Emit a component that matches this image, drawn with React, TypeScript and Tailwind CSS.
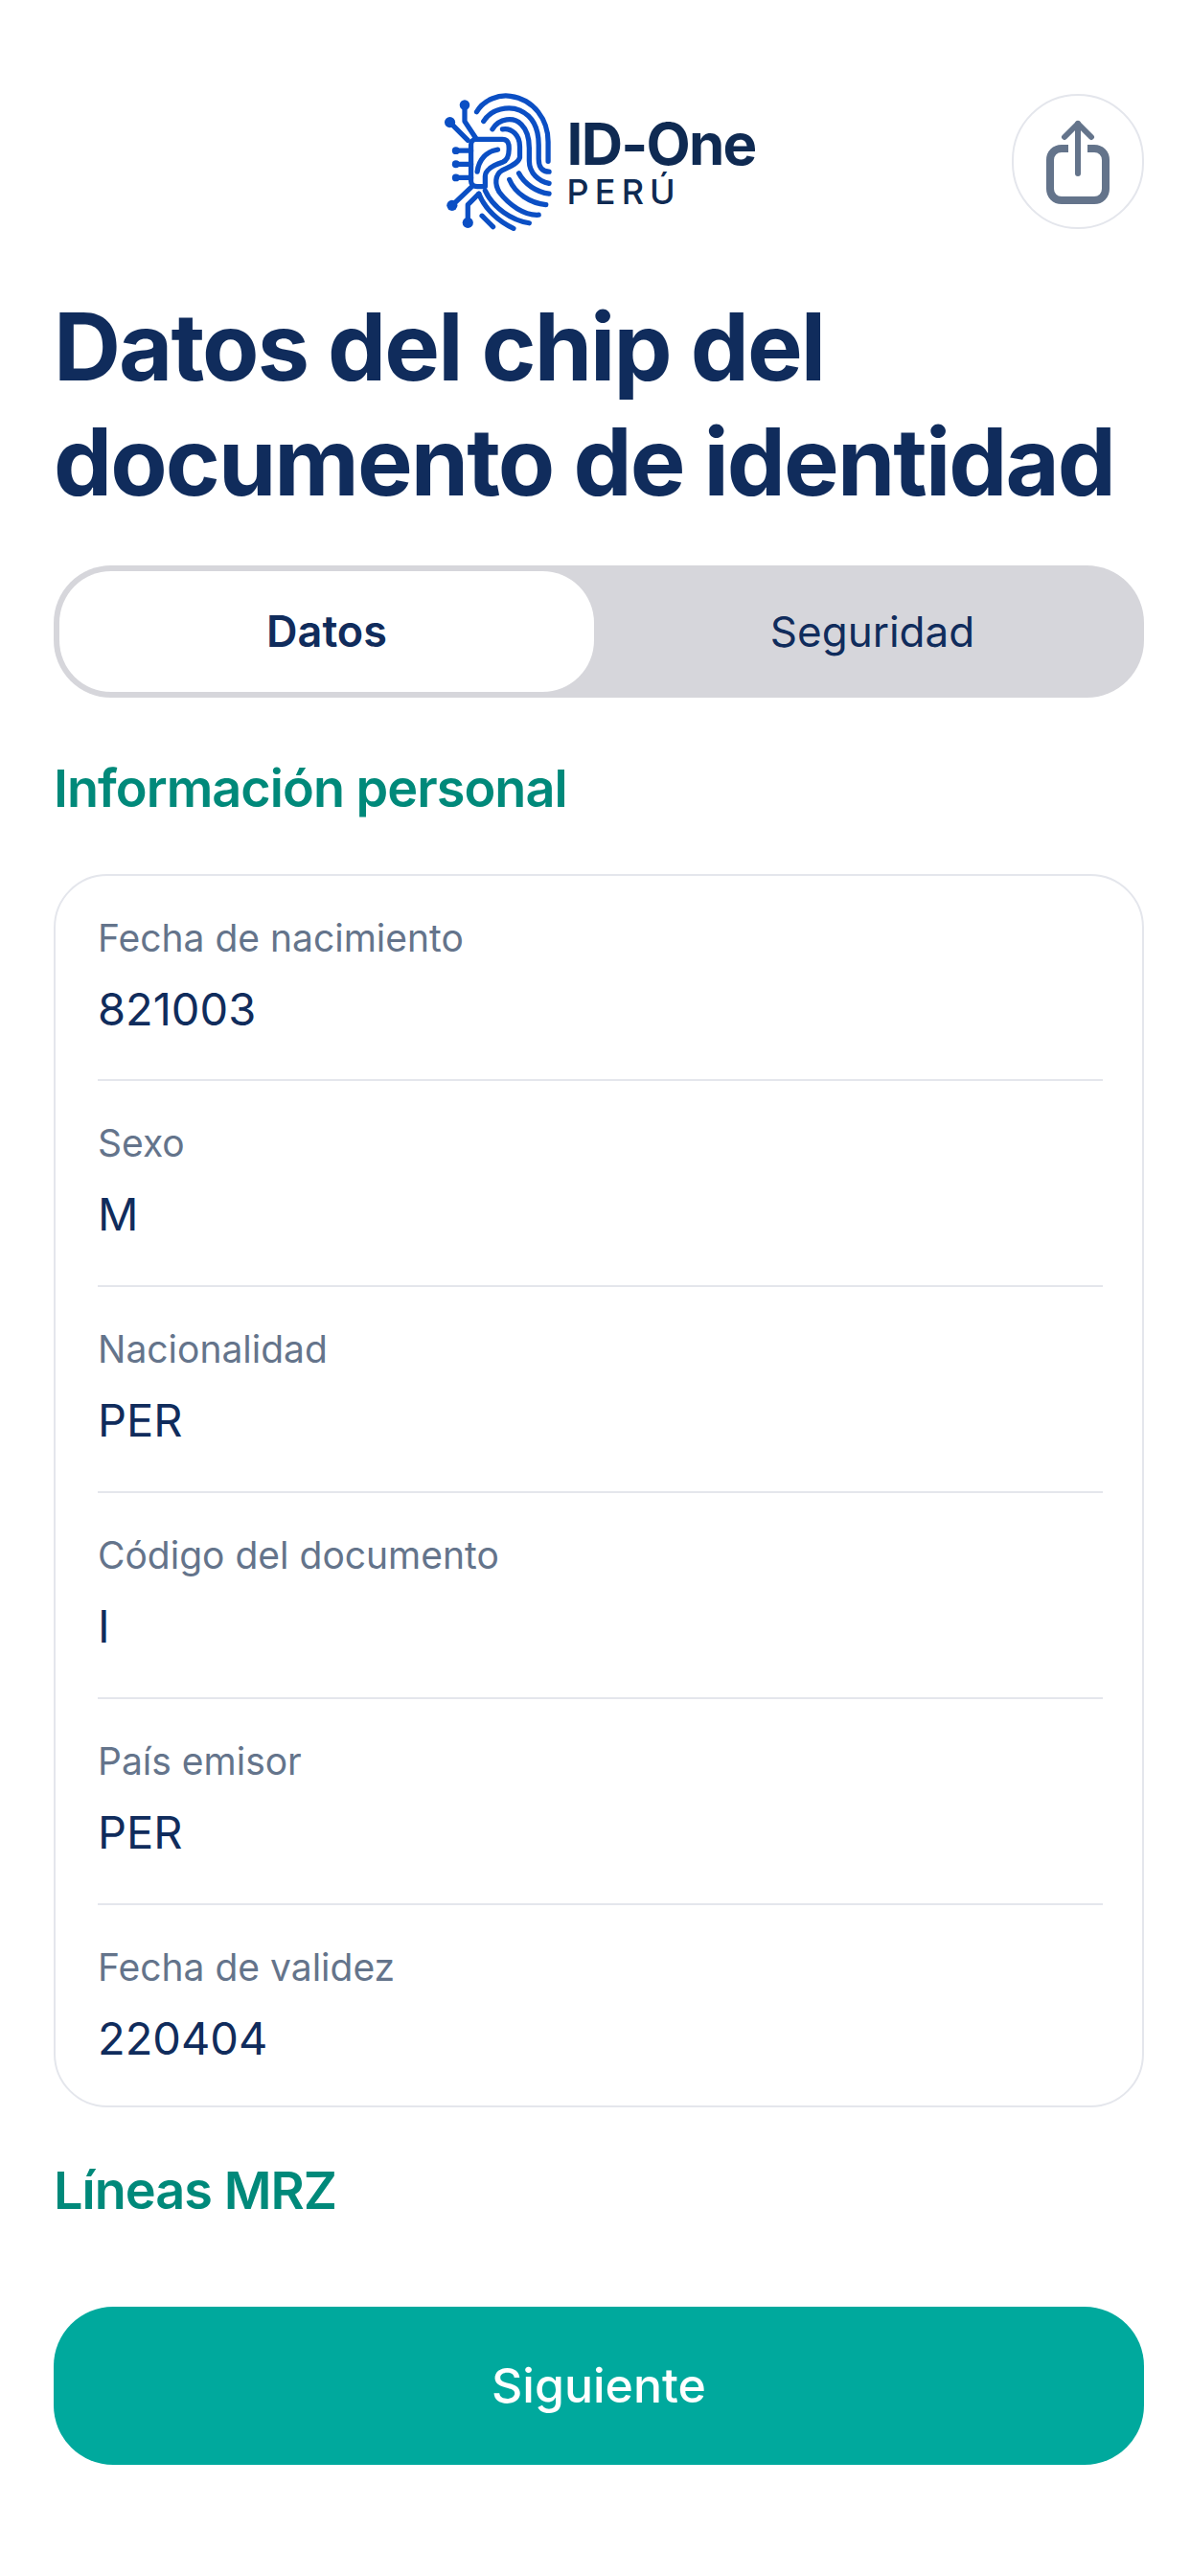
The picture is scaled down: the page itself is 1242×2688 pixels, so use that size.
const rows = [
  { label: "Fecha de nacimiento", value: "821003" },
  { label: "Sexo", value: "M" },
  { label: "Nacionalidad", value: "PER" },
  { label: "Código del documento", value: "I" },
  { label: "País emisor", value: "PER" },
  { label: "Fecha de validez", value: "220404" },
];

function Fingerprint() {
  return (
    <svg viewBox="60 70 350 445" className="w-[115px] h-[147px] shrink-0" fill="none" stroke="#0B4FC4" strokeWidth="16" strokeLinecap="round" strokeLinejoin="round">
      {/* ridges */}
      <path d="M168 135C190 95 240 80 275 85C350 95 395 160 395 230L395 292" />
      <path d="M190 165C215 125 270 115 305 130C350 150 365 195 365 240L365 285C365 320 385 325 398 325" />
      <path d="M218 190C240 155 285 150 310 175C330 195 335 220 335 250L335 290C335 330 365 355 398 362" />
      <path d="M250 190C280 185 305 210 305 245L305 280C300 300 270 310 250 320C225 335 225 365 240 390C270 430 320 465 365 462" />
      <path d="M302 330C320 365 360 390 398 395" />
      <path d="M272 350C290 395 340 425 388 430" />
      <path d="M195 385C220 440 280 480 335 488" />
      <path d="M175 395C195 445 240 485 285 505" />
      <path d="M185 465L220 500" />
      {/* chip */}
      <path d="M270 240C268 228 262 222 250 222L165 222C155 222 150 230 150 240L150 355C150 365 158 372 170 372L195 372L195 340C195 320 220 305 250 295C272 287 272 262 270 240Z" />
      <path d="M170 325C175 285 200 260 235 255" />
      {/* circuit */}
      <path d="M130 113L130 165L165 218" />
      <path d="M83 168L140 225" />
      <path d="M102 258L150 258M102 301L150 301M102 344L150 344" />
      <path d="M90 432L150 375" />
      <path d="M140 487L140 430L175 395" />
      <g fill="#0B4FC4" stroke="none">
        <circle cx="130" cy="113" r="16" />
        <circle cx="83" cy="168" r="17" />
        <circle cx="102" cy="258" r="12" />
        <circle cx="102" cy="301" r="12" />
        <circle cx="102" cy="344" r="12" />
        <circle cx="90" cy="432" r="17" />
        <circle cx="140" cy="487" r="17" />
      </g>
    </svg>
  );
}

function ShareIcon() {
  return (
    <svg viewBox="0 0 66 88" className="w-[66px] h-[88px]" fill="none" stroke="#64748B" strokeLinecap="round" strokeLinejoin="round">
      <path d="M33 4L33 56" strokeWidth="6" />
      <path d="M19 18L33 4L47 18" strokeWidth="6" />
      <path d="M23 30L16 30C9 30 4 35 4 42L4 72C4 79 9 84 16 84L50 84C57 84 62 79 62 72L62 42C62 35 57 30 50 30L43 30" strokeWidth="8" strokeLinecap="butt" />
    </svg>
  );
}

export default function App() {
  return (
    <div className="w-[1242px] h-[2688px] bg-white pl-[56px] pr-[48px] pt-[95px] font-['Inter',sans-serif]">
      {/* Header */}
      <header className="grid grid-cols-[1fr_auto_1fr] items-center h-[144px]">
        <div />
        <div className="flex items-center gap-[15px]">
          <Fingerprint />
          <div className="flex flex-col">
            <span className="text-[60px] leading-[62px] font-bold tracking-[-0.03em] text-[#0F2A52]">ID-One</span>
            <span className="text-[36px] leading-[38px] font-medium tracking-[0.17em] text-[#0F2A52]">PERÚ</span>
          </div>
        </div>
        <div className="flex justify-end">
          <button className="w-[138px] h-[141px] rounded-full border-2 border-[#E4E6EC] bg-white flex items-center justify-center">
            <ShareIcon />
          </button>
        </div>
      </header>

      <h1 className="mt-[63px] text-[97px] leading-[120px] font-bold tracking-[-0.02em] text-[#102C5C] whitespace-nowrap">
        Datos del chip del
        <br />
        documento de identidad
      </h1>

      {/* Tabs */}
      <div className="mt-[48px] h-[138px] rounded-[60px] bg-[#D6D6DB] p-[6px] flex">
        <div className="w-[558px] rounded-[54px] bg-white flex items-center justify-center text-[45px] font-semibold text-[#102C5C]">
          Datos
        </div>
        <div className="flex-1 flex items-center justify-center pl-[13px] text-[44px] text-[#102C5C]">Seguridad</div>
      </div>

      <h2 className="mt-[62px] text-[54px] leading-[66px] font-semibold tracking-[-0.018em] text-[#00897A]">Información personal</h2>

      {/* Card */}
      <div className="mt-[56px] h-[1287px] rounded-[56px] border-2 border-[#E4E6EC] pl-[44px] pr-[41px] flex flex-col">
        {rows.map((row, i) => (
          <div
            key={row.label}
            className={
              i < rows.length - 1
                ? "h-[215px] first:h-[214px] pt-[41px] border-b-2 border-[#E4E6EC]"
                : "flex-1 pt-[41px]"
            }
          >
            <div className="text-[39px] leading-[48px] text-[#64748B]">{row.label}</div>
            <div className="mt-[22px] text-[47px] leading-[56px] text-[#102C5C]">{row.value}</div>
          </div>
        ))}
      </div>

      <h2 className="mt-[54px] text-[54px] leading-[66px] font-semibold tracking-[-0.018em] text-[#00897A]">Líneas MRZ</h2>

      <button className="mt-[88px] w-full h-[165px] rounded-[62px] bg-[#00A99D] text-white text-[50px] font-medium">
        Siguiente
      </button>
    </div>
  );
}
